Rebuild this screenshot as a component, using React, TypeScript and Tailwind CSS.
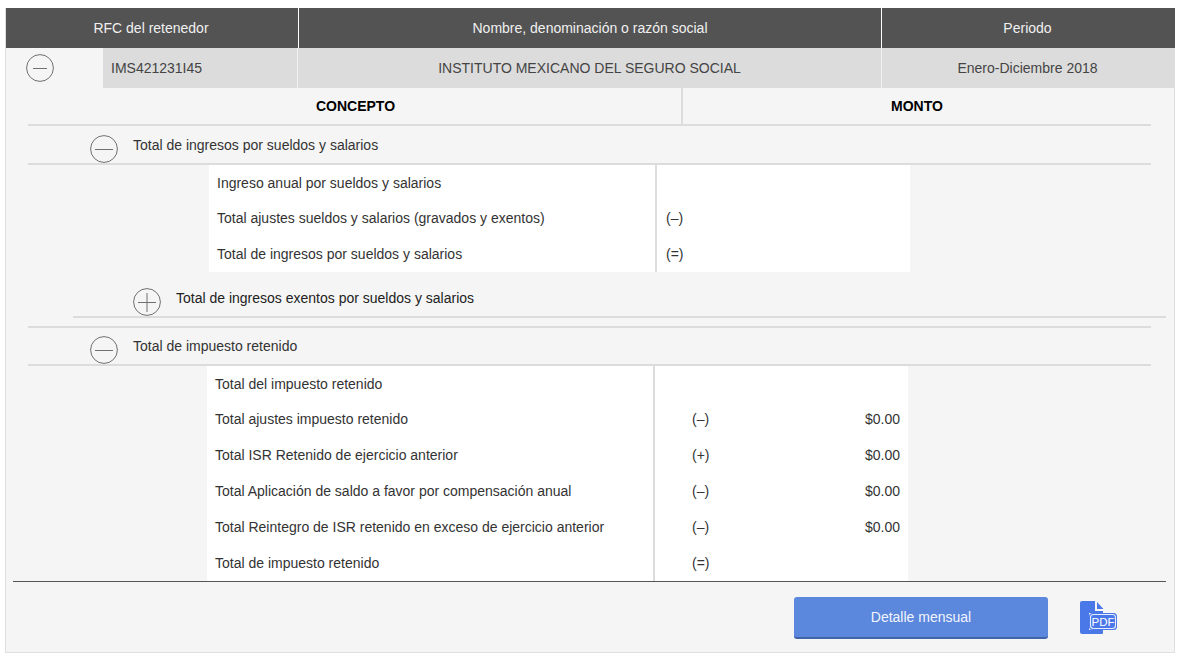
import React from "react";

function Circle({ plus = false, short = false }: { plus?: boolean; short?: boolean }) {
  return (
    <svg width="28" height="28" viewBox="0 0 28 28" fill="none" className="block">
      <circle cx="14" cy="14" r="13.4" stroke="#707070" strokeWidth="1" />
      <path d={short ? "M7 14.5H21" : "M5 14.5H23"} stroke="#707070" strokeWidth="1" />
      {plus && <path d="M14 5V24" stroke="#707070" strokeWidth="1" />}
    </svg>
  );
}

function Row({ label, sign, amount, h, first }: { label: string; sign?: string; amount?: string; h: string; first: boolean }) {
  return (
    <div className={`flex items-center ${h}`}>
      <div className="w-[446px] pl-[8px] h-full flex items-center text-[#333]">{label}</div>
      <div className={`flex-1 h-full flex items-center justify-between border-l-2 border-[#dcdcdc] pr-[8px] ${first ? "pl-[9px]" : "pl-[37px]"}`}>
        <span className="text-[#333]">{sign}</span>
        <span className="text-[#333]">{amount}</span>
      </div>
    </div>
  );
}

export default function App() {
  return (
    <div className="bg-white w-[1182px] h-[660px] pt-[8px] pl-[5px] font-['Liberation_Sans',Arial,sans-serif] text-[14px] leading-none overflow-hidden">
      <div className="w-[1170px] h-[645px] border-x border-b border-[#dfdfdf] bg-[#f5f5f5]">
        <div className="flex h-[40px] -mr-px bg-[#535353] text-[#f0f0f0]">
          <div className="w-[292px] flex items-center justify-center pr-[2px]">RFC del retenedor</div>
          <div className="w-[583px] border-l border-white flex items-center justify-center">Nombre, denominación o razón social</div>
          <div className="flex-1 border-l border-white flex items-center justify-center pr-[2px]">Periodo</div>
        </div>

        <div className="flex h-[40px]">
          <div className="w-[97px] pl-[20px] pt-[6px]"><Circle short /></div>
          <div className="w-[194px] bg-[#dcdcdc] flex items-center pl-[8px] text-[#444]">IMS421231I45</div>
          <div className="w-[584px] bg-[#dcdcdc] border-l border-[#f2f2f2] flex items-center justify-center text-[#444]">INSTITUTO MEXICANO DEL SEGURO SOCIAL</div>
          <div className="flex-1 bg-[#dcdcdc] border-l border-[#f2f2f2] flex items-center justify-center text-[#444] pr-px">Enero-Diciembre 2018</div>
        </div>

        <div className="flex h-[36px] font-bold text-black">
          <div className="w-[675px] pl-[24px] flex items-center justify-center">CONCEPTO</div>
          <div className="w-[2px] bg-[#dcdcdc]"></div>
          <div className="w-[468px] flex items-center justify-center">MONTO</div>
        </div>

        <div className="ml-[22px] w-[1123px] border-y-2 border-[#dcdcdc] h-[41px] flex text-[#333]">
          <div className="pl-[62px] pt-[9px]"><Circle /></div>
          <div className="pl-[15px] pt-[12px]">Total de ingresos por sueldos y salarios</div>
        </div>

        <div className="ml-[203px] w-[701px] bg-white h-[107px]">
          <Row first h="h-[36px]" label="Ingreso anual por sueldos y salarios" />
          <Row first h="h-[34px]" label="Total ajustes sueldos y salarios (gravados y exentos)" sign="(–)" />
          <Row first h="h-[37px]" label="Total de ingresos por sueldos y salarios" sign="(=)" />
        </div>

        <div className="ml-[67px] w-[1093px] h-[46px] border-b-2 border-[#dcdcdc] flex text-[#222]">
          <div className="pl-[60px] pt-[16px]"><Circle plus /></div>
          <div className="pl-[15px] pt-[19px]">Total de ingresos exentos por sueldos y salarios</div>
        </div>

        <div className="ml-[22px] mt-[8px] w-[1123px] border-y-2 border-[#dcdcdc] h-[40px] flex text-[#333]">
          <div className="pl-[62px] pt-[8px]"><Circle /></div>
          <div className="pl-[15px] pt-[11px]">Total de impuesto retenido</div>
        </div>

        <div className="ml-[201px] w-[701px] bg-white h-[215px]">
          <Row first={false} h="h-[36px]" label="Total del impuesto retenido" />
          <Row first={false} h="h-[34px]" label="Total ajustes impuesto retenido" sign="(–)" amount="$0.00" />
          <Row first={false} h="h-[37px]" label="Total ISR Retenido de ejercicio anterior" sign="(+)" amount="$0.00" />
          <Row first={false} h="h-[36px]" label="Total Aplicación de saldo a favor por compensación anual" sign="(–)" amount="$0.00" />
          <Row first={false} h="h-[36px]" label="Total Reintegro de ISR retenido en exceso de ejercicio anterior" sign="(–)" amount="$0.00" />
          <Row first={false} h="h-[36px]" label="Total de impuesto retenido" sign="(=)" />
        </div>

        <div className="ml-[7px] w-[1153px] h-px bg-[#555]"></div>

        <div className="flex items-start pt-[15px] pl-[788px]">
          <button className="w-[254px] h-[42px] rounded-[3px] bg-[#5b87dd] border-b-2 border-[#3f64a8] text-[#f2f5fc]">Detalle mensual</button>
          <svg width="38" height="35" viewBox="0 0 38 35" className="ml-[32px] mt-[4px] block">
            <path d="M0 2Q0 0 2 0H15V10H23V12H9V29H23V32Q23 33 22 33H2Q0 33 0 31Z" fill="#4a78e8" />
            <path d="M17 1L23.5 8H17Z" fill="#4a78e8" />
            <rect x="9" y="12" width="28" height="17" rx="3.5" fill="#4a78e8" />
            <rect x="10.5" y="13.5" width="25" height="14" rx="3" fill="none" stroke="#e6edfc" strokeWidth="1.1" />
            <text x="23" y="25" textAnchor="middle" fontSize="11.5" fill="#ffffff" fontFamily="'Liberation Sans', Arial, sans-serif">PDF</text>
          </svg>
        </div>
      </div>
    </div>
  );
}
